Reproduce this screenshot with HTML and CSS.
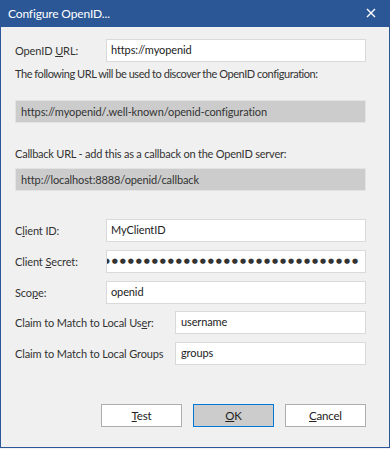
FILE: index.html
```html
<!DOCTYPE html>
<html>
<head>
<meta charset="utf-8">
<title>Configure OpenID...</title>
<link rel="stylesheet" href="styles.css">
</head>
<body>
<div class="window">
  <div class="titlebar">
    <span class="title">Configure OpenID...</span>
    <svg class="close" width="10" height="10" viewBox="0 0 10 10"><path d="M1 1 L9 9 M9 1 L1 9" stroke="#fff" stroke-width="1.4" fill="none"/></svg>
  </div>
  <div class="content">
    <div class="row first">
      <span class="label">OpenID <u>U</u>RL:</span>
      <div class="input">https://myopenid</div>
    </div>
    <div class="note">The following URL will be used to discover the OpenID configuration:</div>
    <div class="readonly box1">https://myopenid/.well-known/openid-configuration</div>
    <div class="note note2">Callback URL - add this as a callback on the OpenID server:</div>
    <div class="readonly box2">http://localhost:8888/openid/callback</div>
    <div class="row client">
      <span class="label">C<u>l</u>ient ID:</span>
      <div class="input">MyClientID</div>
    </div>
    <div class="row">
      <span class="label">Client <u>S</u>ecret:</span>
      <div class="input secret"><span class="dots">●●●●●●●●●●●●●●●●●●●●●●●●●●●●●●●●●●●</span></div>
    </div>
    <div class="row">
      <span class="label">Sco<u>p</u>e:</span>
      <div class="input">openid</div>
    </div>
    <div class="row claim">
      <span class="label wide">Claim to Match to Local Us<u>e</u>r:</span>
      <div class="input">username</div>
    </div>
    <div class="row claim2">
      <span class="label wide">Claim to Match to Local Groups</span>
      <div class="input">groups</div>
    </div>
    <div class="buttons">
      <div class="btn"><u>T</u>est</div>
      <div class="btn default"><u>O</u>K</div>
      <div class="btn"><u>C</u>ancel</div>
    </div>
  </div>
</div>
</body>
</html>
```
FILE: styles.css
```css
html, body {
  margin: 0;
  padding: 0;
  background: #f0f0f0;
}
.window {
  width: 390px;
  height: 448px;
  box-sizing: border-box;
  border: 1px solid #2b5797;
  border-top: none;
  background: #f0f0f0;
  font-family: Lato, "Liberation Sans", Arial, sans-serif;
  font-size: 11px;
  letter-spacing: -0.12px;
  color: #333;
  display: flex;
  flex-direction: column;
}
.titlebar {
  height: 27px;
  margin: 0 -1px;
  background: #2b5797;
  color: #fff;
  display: flex;
  align-items: center;
  justify-content: space-between;
  padding: 0 14px 0 8px;
}
.title {
  font-size: 12px;
  letter-spacing: -0.15px;
}
.close {
  display: block;
  margin-top: -2px;
}
.content {
  padding: 0 0 0 14px;
  display: flex;
  flex-direction: column;
}
.row {
  display: flex;
  align-items: center;
  height: 23px;
  margin-top: 8px;
}
.row.first { margin-top: 12px; }
.row.client { margin-top: 28px; }
.row.claim { margin-top: 7px; }
.label {
  width: 91px;
  flex: none;
  white-space: nowrap;
}
.label.wide { width: 160px; }
.input {
  width: 260px;
  height: 23px;
  box-sizing: border-box;
  background: #fff;
  border: 1px solid #d9d9d9;
  padding: 0 4px;
  line-height: 20px;
  color: #222;
  overflow: hidden;
  white-space: nowrap;
}
.claim .input, .claim2 .input { width: 191px; padding-left: 5px; }
.secret {
  display: flex;
  justify-content: flex-end;
  padding-right: 5px;
  letter-spacing: 0;
}
.dots {
  font-family: "DejaVu Sans", sans-serif;
  font-size: 7px;
  letter-spacing: 1.9px;
  color: #333;
  line-height: 21px;
}
.note {
  margin-top: 4px;
  height: 16px;
  line-height: 16px;
  white-space: nowrap;
  letter-spacing: -0.45px;
}
.note2 {
  margin-top: 23px;
  letter-spacing: -0.22px;
}
.readonly {
  width: 351px;
  height: 23px;
  box-sizing: border-box;
  background: #cccccc;
  border: 1px solid #e3e3e3;
  padding: 0 5px;
  line-height: 21px;
  color: #333;
  white-space: nowrap;
}
.box1 { margin-top: 18px; }
.box2 { margin-top: 6px; }
.buttons {
  display: flex;
  justify-content: flex-end;
  gap: 11px;
  margin-top: 39px;
  width: 351px;
}
.btn {
  width: 81px;
  height: 23px;
  box-sizing: border-box;
  background: #fff;
  border: 1px solid #adadad;
  text-align: center;
  line-height: 21px;
  color: #222;
  font-size: 11.5px;
  letter-spacing: -0.2px;
}
.btn.default {
  background: #cccccc;
  border-color: #0078d7;
}
u { text-underline-offset: 1px; }
```
